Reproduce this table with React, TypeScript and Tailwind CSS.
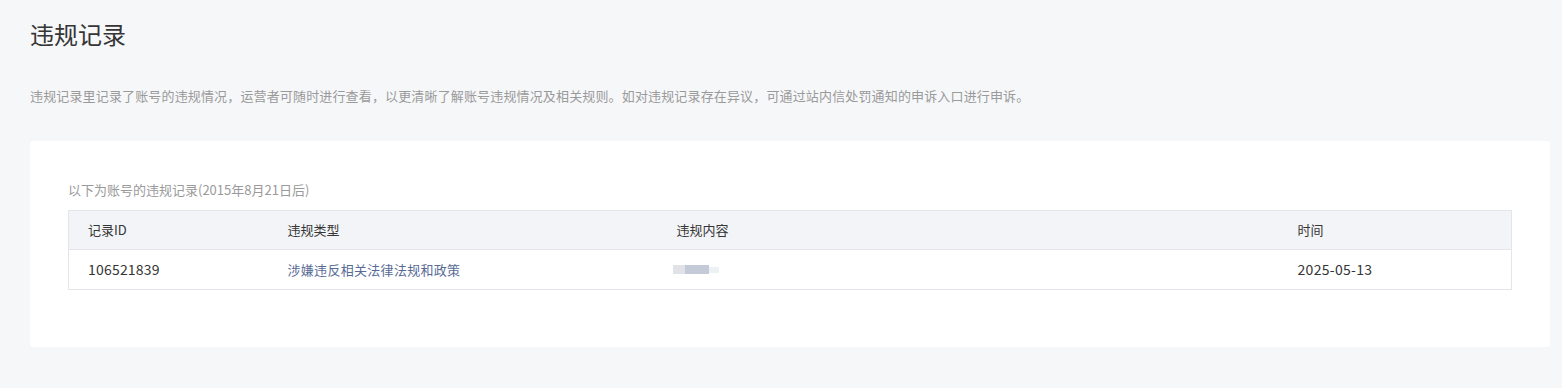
import React from 'react';

type Violation = {
  id: string;
  type: string;
  date: string;
};

const records: Violation[] = [
  { id: '106521839', type: '涉嫌违反相关法律法规和政策', date: '2025-05-13' },
];

const font = { fontFamily: '"Noto Sans CJK SC", "Noto Sans", sans-serif' };

// content column is masked in the list, shown as a smeared placeholder
const MaskedContent: React.FC = () => (
  <div className="flex h-[10px] items-center">
    <span className="block h-[9px] w-[12px] bg-[#e1e2e8]" />
    <span className="block h-[9px] w-[24px] bg-[#c4cad8]" />
    <span className="block h-[6px] w-[10px] bg-[#eef1f4]" />
  </div>
);

export default function App() {
  return (
    <div className="min-h-[388px] w-full bg-[#f6f7f9] px-[30px] pt-[18px] pb-[41px] text-[#353535]" style={font}>
      <h1 className="text-[24px] leading-[32px] font-normal text-[#353535]">违规记录</h1>
      <p className="mt-[37px] text-[13px] leading-[18px] tracking-[0.15px] text-[#9a9a9a]">
        违规记录里记录了账号的违规情况，运营者可随时进行查看，以更清晰了解账号违规情况及相关规则。如对违规记录存在异议，可通过站内信处罚通知的申诉入口进行申诉。
      </p>

      <div className="mt-[36px] w-[1520px] rounded-[3px] bg-white px-[38px] pt-[40px] pb-[57px]">
        <p className="text-[13px] leading-[18px] text-[#9a9a9a]">以下为账号的违规记录(2015年8月21日后)</p>
        <table className="mt-[11px] w-[1444px] table-fixed border-collapse border border-[#e4e5ea] text-[13px]">
          <colgroup>
            <col className="w-[200px]" />
            <col className="w-[389px]" />
            <col className="w-[621px]" />
            <col />
          </colgroup>
          <thead>
            <tr className="h-[39px] bg-[#f3f4f7] text-left">
              <th className="pl-[19px] font-normal">记录ID</th>
              <th className="pl-[19px] font-normal">违规类型</th>
              <th className="pl-[19px] font-normal">违规内容</th>
              <th className="pl-[19px] font-normal">时间</th>
            </tr>
          </thead>
          <tbody>
            {records.map(r => (
              <tr key={r.id} className="h-[40px] border-t border-[#e4e5ea]">
                <td className="pl-[19px] text-[14px] tracking-[0.2px]">{r.id}</td>
                <td className="pl-[19px] tracking-[0.3px] text-[#576b95]">{r.type}</td>
                <td className="pl-[15px]">
                  <MaskedContent />
                </td>
                <td className="pl-[19px] text-[14px] tracking-[0.3px]">{r.date}</td>
              </tr>
            ))}
          </tbody>
        </table>
      </div>
    </div>
  );
}
